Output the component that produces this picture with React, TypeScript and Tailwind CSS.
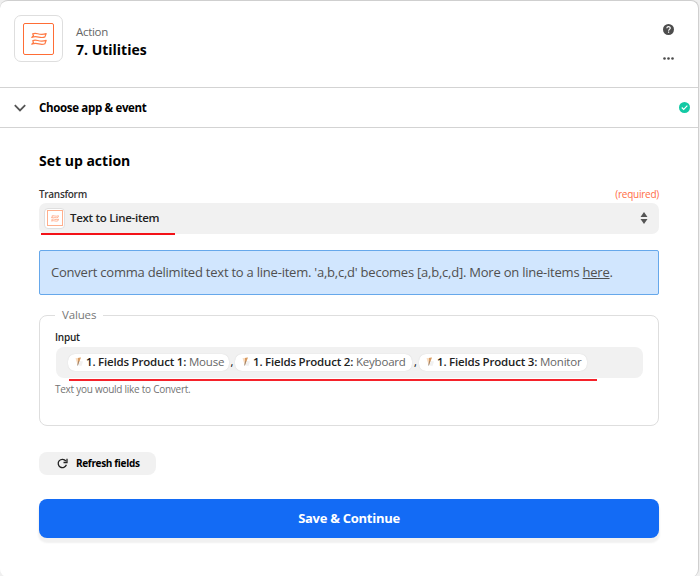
import React from "react";

function Waves({ className, stroke }: { className: string; stroke: number }) {
  return (
    <svg viewBox="0 0 16 14" className={className} fill="none" stroke="#ff7a45" strokeWidth={stroke} strokeLinejoin="round">
      <path d="M1.700 1.900C6 -.4 7.500 4.200 15.200 1.600L13.900 4.900C9 7.200 6.500 2.800 .8 5.400L2.500 3.500z" />
      <path d="M1.700 8.700C6 6.400 7.500 11 15.200 8.400L13.900 11.700C9 14 6.500 9.600 .8 12.200L2.500 10.300z" />
    </svg>
  );
}

function Pill({ label, value, width }: { label: string; value: string; width: string }) {
  return (
    <span className={`flex h-[17px] shrink-0 items-center rounded-[7px] bg-white pl-[6px] shadow-[0_0_1px_#ccc] ${width}`}>
      <svg viewBox="0 0 11 12" className="mr-[2px] h-3 w-[11px] shrink-0">
        <path d="M6 5l3 .5L7.500 10 4 9.500z" fill="#f1f1f1" />
        <path d="M1.500 2.300L6.500 1.500 3.700 9z" fill="#f9dcc0" />
        <path d="M4 2l3-.5-3.200 8z" fill="#d69a62" />
        <path d="M4.800 5L3.500 9.500" stroke="#8d7c70" strokeWidth=".7" />
      </svg>
      <span className="-ml-px pb-px whitespace-nowrap text-[11.500px] leading-4 font-semibold tracking-[-0.2px] text-[#222]">
        {label} <span className="font-normal text-[#666]">{value}</span>
      </span>
    </span>
  );
}

export default function App() {
  return (
    <div className="h-[576px] w-[700px] overflow-hidden bg-[#efefef] font-['Open_Sans','Noto_Sans',sans-serif] text-black">
      <main className="h-[577px] w-[699px] rounded-lg border-t border-r border-[#cfcfcf] bg-white">
        <header className="flex h-[87px] border-b border-[#d3d3d3] pt-[14px] pl-[14px]">
          <div className="flex h-[47px] w-[49px] items-start rounded-[7px] border border-[#dedede] pt-[7px] pl-2">
            <div className="flex h-8 w-[31px] items-center justify-center rounded-[2px] border border-[#ff6d35] bg-white">
              <Waves className="h-[14px] w-4" stroke={1.2} />
            </div>
          </div>
          <div className="ml-[13px] pt-[9px]">
            <div className="text-[11.500px] leading-4 tracking-[-0.3px] text-[#666]">Action</div>
            <h1 className="text-[14px] leading-5 font-bold">7. Utilities</h1>
          </div>
          <div className="mr-[24px] ml-auto flex flex-col items-center pt-[9px]">
            <svg viewBox="0 0 12 12" className="h-[11px] w-[11px]">
              <circle cx="6" cy="6" r="6" fill="#4d4d4d" />
              <path d="M4.200 4.700C4.200 2.300 7.900 2.400 7.900 4.500 7.900 5.800 6.100 5.900 6.100 7.300M6.100 8.300v1.300" stroke="white" strokeWidth="1.300" fill="none" />
            </svg>
            <svg viewBox="0 0 11 3" className="mt-[22px] h-[3px] w-[11px]" fill="#4a4a4a">
              <circle cx="1.500" cy="1.500" r="1.300" />
              <circle cx="5.500" cy="1.500" r="1.300" />
              <circle cx="9.500" cy="1.500" r="1.300" />
            </svg>
          </div>
        </header>
        <section className="flex h-10 items-center border-b border-[#d3d3d3] pr-[8px] pl-[14px]">
          <svg viewBox="0 0 12 8" className="h-2 w-3" fill="none" stroke="#555" strokeWidth="1.800">
            <path d="M.8 1.200L6 6.400l5.200-5.200" />
          </svg>
          <h2 className="ml-[13px] text-[11.500px] leading-4 font-bold tracking-[-0.33px]">Choose app &amp; event</h2>
          <svg viewBox="0 0 12 12" className="ml-auto h-[11px] w-[11px]">
            <circle cx="6" cy="6" r="6" fill="#13c9a4" />
            <path d="M3 6l2.100 2.100L9.100 4" stroke="white" strokeWidth="1.300" fill="none" />
          </svg>
        </section>
        <section className="w-[659px] pt-[23px] pl-[39px]">
          <h2 className="text-[14px] leading-5 font-bold">Set up action</h2>
          <div className="mt-[15px] flex h-[17px] items-center justify-between text-[10px]">
            <span className="font-semibold tracking-[-0.3px] text-[#333]">Transform</span>
            <span className="tracking-[-0.25px] text-[#ff6d45]">(required)</span>
          </div>
          <div className="flex h-[31px] items-center rounded-[7px] bg-[#f1f1f1] pr-[11px] pb-px pl-[5px]">
            <span className="flex h-[21px] w-[21px] items-center justify-center rounded-[4px] border border-[#dfdfdf] bg-white">
              <span className="flex h-4 w-4 items-center justify-center border border-[#ffaf8c]">
                <Waves className="h-[7px] w-2 opacity-70" stroke={1.5} />
              </span>
            </span>
            <span className="ml-[5px] text-[11.500px] leading-4 font-semibold tracking-[-0.28px] text-[#222]">Text to Line-item</span>
            <svg viewBox="0 0 8 12" className="ml-auto h-3 w-2" fill="#555">
              <path d="M4 0l3.500 5h-7zM.5 7h7L4 12z" />
            </svg>
          </div>
          <div className="-mt-px ml-[2px] h-[2px] w-[134px] bg-[#f31218]" />
          <div className="mt-[15px] flex h-[45px] items-center rounded-[2px] border border-[#66a8eb] bg-[#d1e6fe] pl-[11px] text-[13px] tracking-[-0.225px] whitespace-nowrap text-[#505050]">
            <p>Convert comma delimited text to a line-item. 'a,b,c,d' becomes [a,b,c,d]. More on line-items <a className="underline">here</a>.</p>
          </div>
          <fieldset className="mt-[12px] h-[119px] rounded-[8px] border border-[#dedede] pr-[15px] pl-4">
            <legend className="-ml-px px-[7px] text-[11.500px] leading-4 tracking-[-0.15px] text-[#777]">Values</legend>
            <div className="mt-[7px] -ml-px text-[10px] leading-[15px] font-semibold tracking-[-0.25px] text-[#222]">Input</div>
            <div className="mt-[2px] flex h-[31px] items-center rounded-[8px] bg-[#f1f1f1] pb-px pl-[12px] text-[11px]">
              <Pill label="1. Fields Product 1:" value="Mouse" width="w-[161px]" />
              <span className="w-[6px] text-center">,</span>
              <Pill label="1. Fields Product 2:" value="Keyboard" width="w-[177px]" />
              <span className="w-[7px] text-center">,</span>
              <Pill label="1. Fields Product 3:" value="Monitor" width="w-[168px]" />
            </div>
            <div className="mt-[1px] ml-[13px] h-[2px] w-[528px] bg-[#f5222a]" />
            <p className="mt-[1px] -ml-px text-[10px] leading-[15px] tracking-[-0.26px] text-[#737373]">Text you would like to Convert.</p>
          </fieldset>
          <button className="mt-[26px] flex h-[23px] w-[117px] items-center rounded-[8px] bg-[#f1f1f1] pl-[18px] text-[10px] font-bold tracking-[-0.33px]">
            <svg viewBox="0 0 11 11" className="mr-[8px] h-[11px] w-[11px]" fill="none" stroke="#222" strokeWidth="1.300">
              <path d="M9.400 6.800A4.200 4.200 0 1 1 8.800 3M10 .8v3.700H6.500" />
            </svg>
            Refresh fields
          </button>
          <button className="mt-[24px] flex h-[39px] w-full items-center justify-center rounded-[8px] bg-[#136bf5] text-[13px] font-bold tracking-[-0.28px] text-white shadow-[0_4px_2px_1px_#f1f1f1]">
            Save &amp; Continue
          </button>
        </section>
      </main>
    </div>
  );
}
